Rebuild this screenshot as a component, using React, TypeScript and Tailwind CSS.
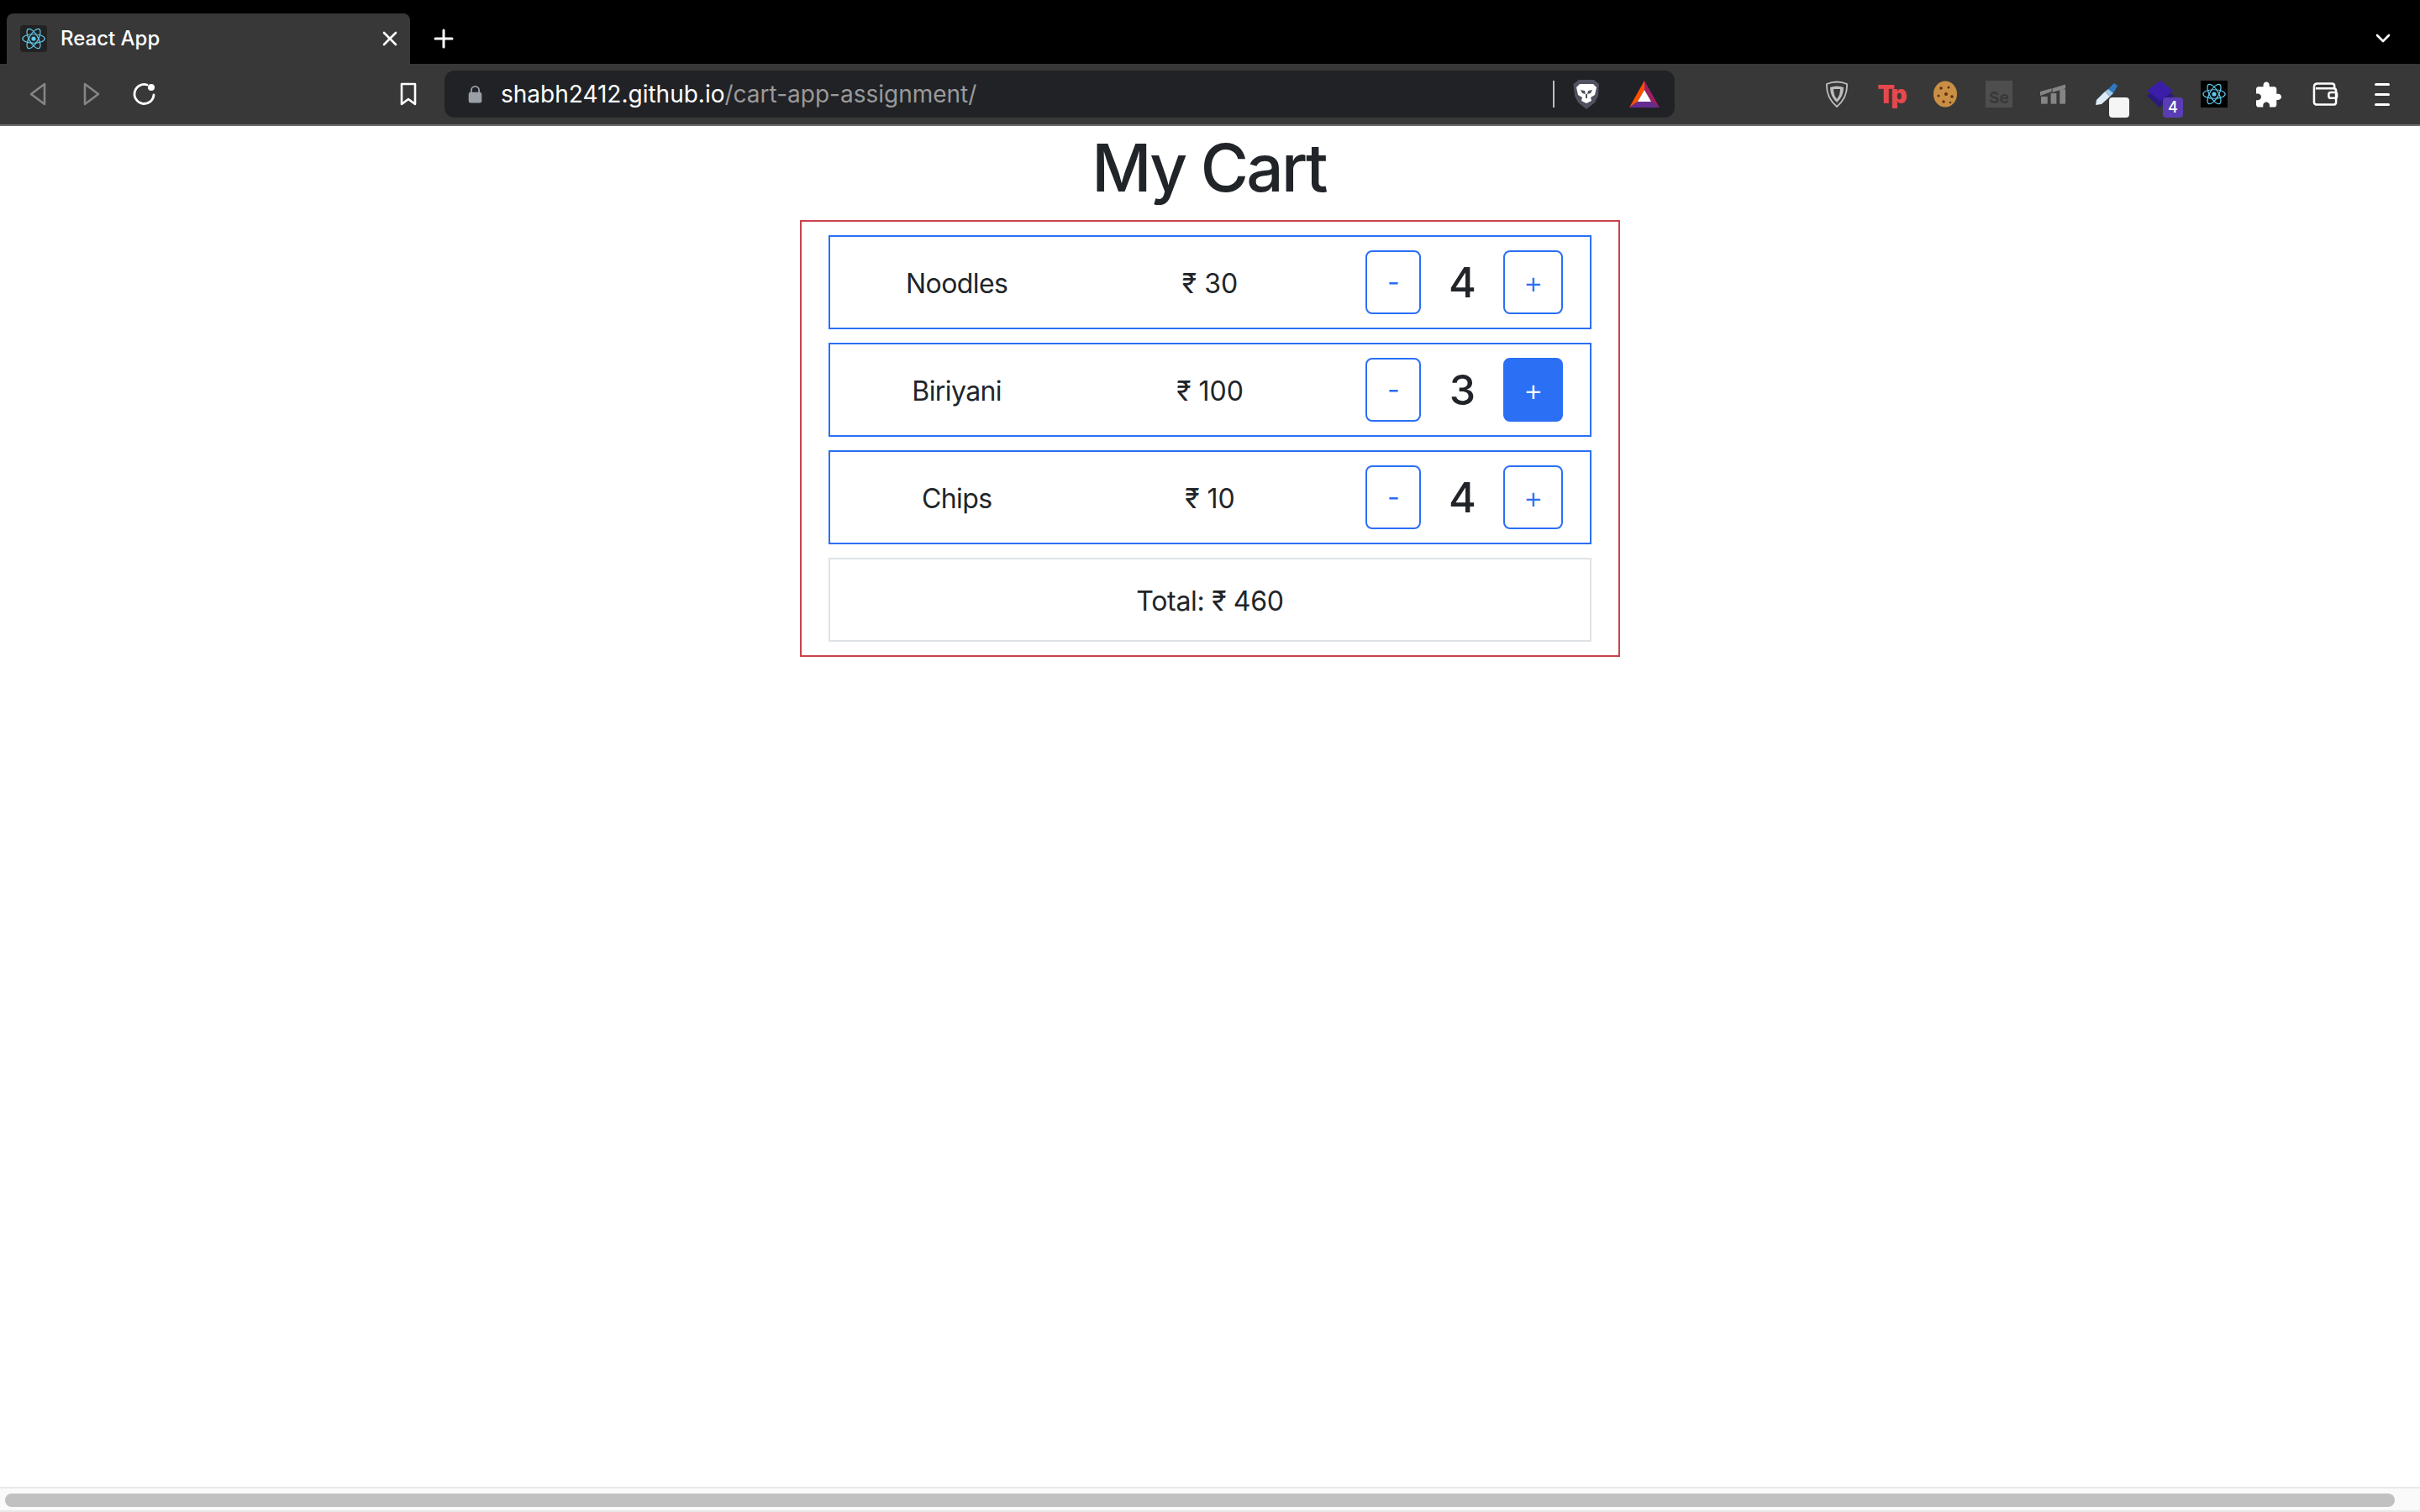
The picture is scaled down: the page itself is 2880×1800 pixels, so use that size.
const ReactAtom = ({ className }: { className: string }) => (
  <svg viewBox="0 0 32 32" className={className} fill="none" stroke="#61c9ea" strokeWidth="1.3">
    <ellipse cx="16" cy="16" rx="14" ry="5.6" />
    <ellipse cx="16" cy="16" rx="14" ry="5.6" transform="rotate(60 16 16)" />
    <ellipse cx="16" cy="16" rx="14" ry="5.6" transform="rotate(120 16 16)" />
    <circle cx="16" cy="16" r="2.8" fill="#61c9ea" stroke="none" />
  </svg>
);

const BackIcon = () => (
  <svg viewBox="0 0 22 28" className="w-[22px] h-[28px]" fill="none" stroke="#858585" strokeWidth="2.6" strokeLinejoin="round">
    <path d="M19 2 L3 14 L19 26 Z" />
  </svg>
);

const ForwardIcon = () => (
  <svg viewBox="0 0 22 28" className="w-[22px] h-[28px]" fill="none" stroke="#858585" strokeWidth="2.6" strokeLinejoin="round">
    <path d="M3 2 L19 14 L3 26 Z" />
  </svg>
);

const ReloadIcon = () => (
  <svg viewBox="0 0 30 30" className="w-[30px] h-[30px]" fill="none" stroke="#fff" strokeWidth="2.8" strokeLinecap="round">
    <path d="M19 4 A11.5 11.5 0 1 0 27 16" />
    <circle cx="24" cy="7" r="4" fill="#fff" stroke="none" />
  </svg>
);

const BookmarkIcon = () => (
  <svg viewBox="0 0 22 28" className="w-[22px] h-[28px]" fill="none" stroke="#fff" strokeWidth="2.6" strokeLinejoin="round">
    <path d="M3 2 H19 V26 L11 20 L3 26 Z" />
  </svg>
);

const LockIcon = () => (
  <svg viewBox="0 0 18 24" className="w-[17px] h-[22px]" fill="#9aa0a6">
    <path d="M4 10 V7 A5 5 0 0 1 14 7 V10" fill="none" stroke="#9aa0a6" strokeWidth="2" />
    <rect x="0.5" y="9.5" width="17" height="14" rx="2.5" />
  </svg>
);

const BraveIcon = () => (
  <svg viewBox="0 0 32 36" className="w-[32px] h-[36px]">
    <path d="M7 1 H25 L31 6 L30 20 L26 28 L16 36 L6 28 L2 20 L0.5 6 Z" fill="#50525f" />
    <path d="M8 6 H24 L28 10 L26 19 L21 22 L22 26 L16 29 L10 26 L11 22 L6 19 L4 10 Z" fill="#fff" />
    <path d="M9 13 L14 14 L15 18 L11 17 Z M23 13 L18 14 L17 18 L21 17 Z" fill="#50525f" />
    <path d="M15 18 H17 L17 23 H15 Z" fill="#50525f" />
  </svg>
);

const BatIcon = () => (
  <svg viewBox="0 0 36 32" className="w-[36px] h-[32px]">
    <path d="M18 0 L36 32 L26 25 L18 11 Z" fill="#9e1f63" />
    <path d="M18 0 L18 11 L10 25 L0 32 Z" fill="#ff5000" />
    <path d="M0 32 L10 25 H26 L36 32 Z" fill="#662d91" />
    <path d="M18 11 L26 25 H10 Z" fill="#fff" />
  </svg>
);

const ShieldIcon = () => (
  <svg viewBox="0 0 28 32" className="w-[28px] h-[32px]">
    <path d="M2 4 Q14 -1 26 4 Q27 20 14 31 Q1 20 2 4 Z" fill="none" stroke="#bdbdbd" strokeWidth="1.8" />
    <path d="M6 8 Q14 5 22 8 Q22 19 14 26 Q6 19 6 8 Z" fill="#bdbdbd" />
    <path d="M10 10 H18 Q18 17 14 22 Q10 17 10 10 Z" fill="#383838" />
  </svg>
);

const CookieIcon = () => (
  <svg viewBox="0 0 30 32" className="w-[30px] h-[32px]">
    <ellipse cx="15" cy="16" rx="14" ry="15.5" fill="#c98f45" />
    <circle cx="10" cy="9" r="1.8" fill="#5e3212" />
    <circle cx="19" cy="8" r="1.5" fill="#5e3212" />
    <circle cx="7" cy="18" r="1.6" fill="#5e3212" />
    <circle cx="16" cy="16" r="2" fill="#5e3212" />
    <circle cx="23" cy="19" r="1.8" fill="#5e3212" />
    <circle cx="13" cy="25" r="1.7" fill="#5e3212" />
    <circle cx="21" cy="26" r="1.3" fill="#5e3212" />
  </svg>
);

const ChartIcon = () => (
  <svg viewBox="0 0 32 24" className="w-[31px] h-6" fill="#858585">
    <path d="M0 9 L14 5 V9 L0 14 Z" />
    <path d="M15 5 L31 0 V5 L15 10 Z" />
    <rect x="1" y="15" width="8" height="9" />
    <rect x="13" y="11" width="7" height="13" />
    <rect x="24" y="6" width="7" height="18" />
  </svg>
);

const PenIcon = () => (
  <svg viewBox="0 0 26 26" className="w-[26px] h-[26px]">
    <path d="M15 7 L22 0 L26 3 L21 12 Z" fill="#2f78c4" />
    <path d="M11 10 L15 7 L21 12 L17 16 Z" fill="#9cc8ec" />
    <path d="M1 20 L11 10 L17 16 L7 25 L0 26 Z" fill="#dcecf8" />
  </svg>
);

const StackIcon = () => (
  <svg viewBox="0 0 32 32" className="w-8 h-8">
    <path d="M0 18 L8 12 H24 L32 18 L15 32 Z" fill="#2a1a7c" />
    <path d="M16 0 L31 12 L16 24 L0 12 Z" fill="#3a1ea8" />
  </svg>
);

const PuzzleIcon = () => (
  <svg viewBox="2 1 21 21" className="w-[30px] h-[31px]" fill="#fff">
    <path d="M20.5 11H19V7c0-1.1-.9-2-2-2h-4V3.5C13 2.12 11.88 1 10.5 1S8 2.12 8 3.5V5H4c-1.1 0-1.99.9-1.99 2v3.8H3.5c1.49 0 2.7 1.21 2.7 2.7s-1.21 2.7-2.7 2.7H2V20c0 1.1.9 2 2 2h3.8v-1.5c0-1.49 1.21-2.7 2.7-2.7 1.49 0 2.7 1.21 2.7 2.7V22H17c1.1 0 2-.9 2-2v-4h1.5c1.38 0 2.5-1.12 2.5-2.5S21.88 11 20.5 11z" />
  </svg>
);

const WalletIcon = () => (
  <svg viewBox="0 0 32 32" className="w-[31px] h-[32px]" fill="none" stroke="#fff" strokeWidth="2.6" strokeLinejoin="round">
    <path d="M2 7 Q2 3 6 3 H24 Q27 3 27 6 V9" />
    <path d="M2 7 V26 Q2 29 6 29 H26 Q29 29 29 26 V12 Q29 9 26 9 H4" />
    <rect x="20" y="14" width="10" height="7" rx="2.5" />
  </svg>
);

const items = [
  { name: "Noodles", price: 30, qty: 4, active: false },
  { name: "Biriyani", price: 100, qty: 3, active: true },
  { name: "Chips", price: 10, qty: 4, active: false },
];

export default function App() {
  return (
    <div className="h-screen flex flex-col overflow-hidden bg-white font-['Inter',sans-serif]">
      {/* Tab strip */}
      <div className="h-[76px] shrink-0 bg-black flex items-end pl-2">
        <div className="w-[480px] h-[60px] bg-[#383838] rounded-t-lg flex items-center pl-4 pr-[15px]">
          <div className="w-8 h-8 bg-[#222222] rounded flex items-center justify-center">
            <ReactAtom className="w-[30px] h-[30px]" />
          </div>
          <span className="ml-4 text-[24px] font-medium text-white">React App</span>
          <span className="ml-auto">
            <svg viewBox="0 0 18 18" className="w-[18px] h-[18px]" stroke="#fff" strokeWidth="2.6" strokeLinecap="round">
              <path d="M2 2 L16 16 M16 2 L2 16" />
            </svg>
          </span>
        </div>
        <div className="ml-7 h-[60px] flex items-center">
          <svg viewBox="0 0 24 24" className="w-6 h-6" stroke="#fff" strokeWidth="3" strokeLinecap="round">
            <path d="M12 2 V22 M2 12 H22" />
          </svg>
        </div>
        <div className="ml-auto h-[60px] flex items-center pr-[35px]">
          <svg viewBox="0 0 18 12" className="w-[18px] h-3" fill="none" stroke="#fff" strokeWidth="2.6" strokeLinecap="round" strokeLinejoin="round">
            <path d="M2 2 L9 9 L16 2" />
          </svg>
        </div>
      </div>

      {/* Toolbar */}
      <div className="h-[74px] shrink-0 bg-[#383838] border-b-2 border-[#6b6b6b] flex items-center pl-[34px]">
        <BackIcon />
        <div className="ml-[42px]"><ForwardIcon /></div>
        <div className="ml-9"><ReloadIcon /></div>
        <div className="ml-[289px]"><BookmarkIcon /></div>
        <div className="ml-8 w-[1464px] h-14 bg-[#212226] rounded-xl flex items-center pl-7 pr-[18px]">
          <LockIcon />
          <span className="ml-[22px] text-[28px] leading-none text-white">
            shabh2412.github.io<span className="text-[#9a9a9a]">/cart-app-assignment/</span>
          </span>
          <div className="ml-auto w-0.5 h-8 bg-[#bdbdbd]" />
          <div className="ml-[22px]"><BraveIcon /></div>
          <div className="ml-[35px]"><BatIcon /></div>
        </div>
        <div className="ml-[161px] flex items-center">
          <div className="w-[64px] flex justify-center"><ShieldIcon /></div>
          <div className="w-[65px] flex justify-center">
            <span className="text-[30px] font-black leading-none tracking-[-3px] text-[#e5484d]">Tp</span>
          </div>
          <div className="w-[64px] flex justify-center"><CookieIcon /></div>
          <div className="w-[64px] flex justify-center">
            <div className="w-8 h-8 bg-[#4e4e4e] flex items-end justify-center text-[19px] font-bold leading-[22px] text-[#383838]">Se</div>
          </div>
          <div className="w-[64px] flex justify-center"><ChartIcon /></div>
          <div className="w-[64px] flex justify-center relative">
            <PenIcon />
            <div className="absolute left-[35px] top-[17px] w-6 h-6 rounded bg-[#f5f5f5]" />
          </div>
          <div className="w-[64px] flex justify-center relative">
            <StackIcon />
            <div className="absolute left-[35px] top-[20px] w-6 h-6 rounded bg-[#5a3db5] text-white text-[18px] font-medium leading-6 text-center">4</div>
          </div>
          <div className="w-[64px] flex justify-center">
            <div className="w-8 h-8 bg-black flex items-center justify-center">
              <ReactAtom className="w-[30px] h-[30px]" />
            </div>
          </div>
          <div className="w-[66px] flex justify-center"><PuzzleIcon /></div>
          <div className="w-[68px] flex justify-center"><WalletIcon /></div>
          <div className="w-[68px] flex flex-col items-center gap-[9px]">
            <div className="w-[18px] h-[3px] rounded-full bg-white" />
            <div className="w-[18px] h-[3px] rounded-full bg-white" />
            <div className="w-[18px] h-[3px] rounded-full bg-white" />
          </div>
        </div>
      </div>

      {/* Page */}
      <div className="flex-1 flex flex-col items-center text-[#212529]">
        <h1 className="text-[78px] leading-[100px] tracking-[-2.6px] font-medium mb-3 pr-[3px]">My Cart</h1>
        <div className="w-[976px] border-2 border-[#c9434d] px-8 py-4 flex flex-col gap-4">
          {items.map((item) => (
            <div key={item.name} className="h-28 border-2 border-[#2b6ff5] grid grid-cols-3 items-center text-[32px] text-center">
              <div className="pt-1 tracking-[-0.6px]">{item.name}</div>
              <div className="pt-1">₹ {item.price}</div>
              <div className="flex items-center justify-center pl-[3px]">
                <button className="w-[66px] h-[76px] border-2 border-[#2b6ff5] rounded-lg text-[#2b6ff5] text-[32px] leading-none">-</button>
                <span className="w-[98px] text-[50px] font-medium leading-[60px]">{item.qty}</span>
                <button
                  className={
                    item.active
                      ? "w-[71px] h-[76px] border-2 border-[#2b6ff5] rounded-lg bg-[#2b6ff5] text-white text-[36px] font-light leading-none"
                      : "w-[71px] h-[76px] border-2 border-[#2b6ff5] rounded-lg text-[#2b6ff5] text-[36px] font-light leading-none"
                  }
                >
                  +
                </button>
              </div>
            </div>
          ))}
          <div className="h-[100px] pt-1 border-2 border-[#dee2e6] flex items-center justify-center text-[32px] tracking-[-0.3px]">
            Total: ₹ 460
          </div>
        </div>
      </div>

      {/* Horizontal scrollbar */}
      <div className="h-[30px] shrink-0 bg-[#fafafa] border-t-2 border-b-2 border-[#e8e8e8] pt-[6px] pl-[6px] pr-[30px]">
        <div className="h-4 rounded-full bg-[#c1c1c1]" />
      </div>
    </div>
  );
}
